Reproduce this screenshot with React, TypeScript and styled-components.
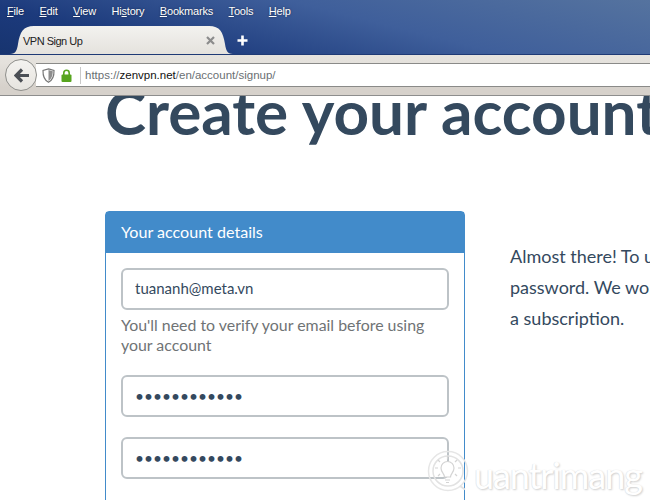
import React from "react";
import styled, { createGlobalStyle } from "styled-components";

const Global = createGlobalStyle`
  html, body { margin: 0; padding: 0; background: #fff; overflow: hidden; }
  #root { width: 650px; height: 500px; }
  * { box-sizing: border-box; }
`;

const Frame = styled.div`
  position: relative;
  width: 650px;
  height: 500px;
  overflow: hidden;
  display: flex;
  flex-direction: column;
`;

const TitleBar = styled.header`
  height: 55px;
  flex: none;
  background: linear-gradient(194deg, #55739f 0%, #3f5f9b 42%, #1c3a7c 78%, #17346f 100%);
  border-bottom: 1px solid #1f3a75;
  display: flex;
  flex-direction: column;
`;

const MenuBar = styled.nav`
  height: 22px;
  display: flex;
  align-items: center;
  padding-left: 7px;
  gap: 15.5px;
  font: 11px "Liberation Sans", Arial, sans-serif;
  letter-spacing: -0.2px;
  color: #fff;
`;

const MenuItem = styled.span`
  text-shadow: 0 0 2px rgba(0, 0, 0, 0.5);
  u { text-underline-offset: 1px; }
`;

const TabStrip = styled.div`
  height: 28px;
  margin-top: 5px;
  display: flex;
  align-items: center;
  padding-left: 10px;
`;

const Tab = styled.div`
  position: relative;
  width: 223px;
  height: 28px;
  display: flex;
  align-items: center;
  justify-content: space-between;
  padding: 1px 18px 0 13px;
  font: 11px "Liberation Sans", Arial, sans-serif;
  letter-spacing: -0.5px;
  color: #222;
`;

const TabShape = styled.svg`
  position: absolute;
  inset: 0;
`;

const TabLabel = styled.span`
  position: relative;
`;

const TabClose = styled.svg`
  position: relative;
`;

const NewTab = styled.svg`
  margin-left: 3px;
`;

const Toolbar = styled.div`
  position: relative;
  height: 41px;
  flex: none;
  background: linear-gradient(#e6e3de, #e4e1dc 20%, #d6d1cb 80%);
  border-bottom: 1px solid #8d8d8d;
  padding: 8px 0 0 36px;
`;

const AddressBar = styled.div`
  height: 24px;
  background: #fff;
  border-top: 1px solid #8a8a88;
  border-bottom: 1px solid #8a8a88;
  display: flex;
  align-items: center;
  padding-left: 6px;
`;

const BackButton = styled.div`
  position: absolute;
  left: 5px;
  top: 4px;
  width: 32px;
  height: 32px;
  border-radius: 50%;
  border: 1px solid #8f8f8c;
  background: linear-gradient(#f4f3f0, #e6e4df);
  display: flex;
  align-items: center;
  justify-content: center;
`;

const LockGroup = styled.div`
  display: flex;
  align-items: center;
  gap: 6px;
  width: 39px;
  height: 17px;
  border-right: 1px solid #c9c9c9;
`;

const Url = styled.div`
  padding-left: 4px;
  font: 11.5px "Liberation Sans", Arial, sans-serif;
  color: #6a6f73;
  b { font-weight: 400; color: #111; }
`;

const Content = styled.main`
  flex: 1;
  min-height: 0;
  overflow: hidden;
  padding-left: 105px;
`;

const Heading = styled.h1`
  margin: -21px 0 0;
  font: 700 62px/72px Lato, sans-serif;
  color: #34495e;
  white-space: nowrap;
`;

const Columns = styled.div`
  display: flex;
  margin-top: 64px;
  gap: 45px;
`;

const Card = styled.section`
  flex: none;
  width: 360px;
  border: 1px solid #428bca;
  border-radius: 4px 4px 0 0;
  height: 400px;
`;

const CardHeader = styled.h2`
  margin: 0;
  height: 41px;
  background: #428bca;
  color: #fff;
  font: 400 16.1px/40px Lato, sans-serif;
  padding-left: 15px;
`;

const CardBody = styled.div`
  padding: 15px 15px 0;
  display: flex;
  flex-direction: column;
`;

const Field = styled.input<{ $gap?: number }>`
  display: block;
  width: 328px;
  height: 42px;
  margin-top: ${(p) => p.$gap ?? 0}px;
  border: 2px solid #bdc3c7;
  border-radius: 6px;
  padding: 0 12px 2px;
  font: 15px Lato, sans-serif;
  color: #34495e;
  outline: none;
  background: #fff;
`;

const PasswordField = styled(Field)`
  padding-bottom: 0;
  font-size: 15.5px;
`;

const Help = styled.p`
  margin: 5px 0 0;
  font: 15.9px/20px Lato, sans-serif;
  color: #6f7375;
`;

const Intro = styled.p`
  margin: 30px 0 0;
  font: 18px/31px Lato, sans-serif;
  color: #34495e;
  white-space: nowrap;
`;

const Watermark = styled.div`
  position: absolute;
  left: 425px;
  top: 449px;
  display: flex;
  align-items: center;
  pointer-events: none;
`;

const WatermarkText = styled.span`
  margin-left: -1px;
  margin-top: 1px;
  font: 400 36px Lato, sans-serif;
  letter-spacing: -1.1px;
  color: #fff;
  text-shadow: 1px 1px 2px #cfcfcf, -0.5px -0.5px 1px #e2e2e2;
`;

const ShieldIcon = () => (
  <svg width="13" height="15" viewBox="0 0 13 15">
    <path d="M6.5.8 12 2.400c.2 5.400-1.300 9.600-5.500 11.800C2.300 12 .8 7.800 1 2.400z" fill="#fff" stroke="#777" strokeWidth="1.200" />
    <path d="M6.500 2v11C9.500 11 10.700 7.500 10.800 3.300z" fill="#8d8d8d" />
  </svg>
);

const LockIcon = () => (
  <svg width="11" height="13" viewBox="0 0 11 13">
    <path d="M2.800 6V4a2.700 2.700 0 0 1 5.400 0v2" fill="none" stroke="#57a51f" strokeWidth="1.600" />
    <rect x="0.500" y="5.500" width="10" height="7.500" rx="1" fill="#57a51f" />
  </svg>
);

const Bulb = () => (
  <svg width="50" height="50" viewBox="0 0 50 50" fill="none">
    <circle cx="23" cy="22" r="19.500" stroke="#e6e6e6" strokeWidth="1.500" />
    <circle cx="23" cy="22" r="15" stroke="#e2e2e2" strokeWidth="1.500" />
    <path d="M19.500 28c0-3.500-3.500-4.500-3.500-9a6.500 6.500 0 0 1 13 0c0 4.500-3.500 5.500-3.500 9z" fill="#fff" stroke="#d4d4d4" strokeWidth="1.200" />
    <path d="M20 31h5M21 33.500h3M22.500 7.500v3M13 11l2 2M32 11l-2 2M10 19h3M33 19h3M13 27l2-2M32 27l-2-2" stroke="#d4d4d4" strokeWidth="1.200" />
    <path d="M35 37l5 3.500" stroke="#e2e2e2" strokeWidth="2" />
  </svg>
);

const menu: [string, string][] = [
  ["F", "ile"],
  ["E", "dit"],
  ["V", "iew"],
  ["", "History"],
  ["B", "ookmarks"],
  ["T", "ools"],
  ["H", "elp"],
];

export default function App() {
  return (
    <Frame>
      <Global />
      <TitleBar>
        <MenuBar>
          {menu.map(([a, b]) => (
            <MenuItem key={b}>
              {b === "History" ? (
                <>
                  Hi<u>s</u>tory
                </>
              ) : (
                <>
                  <u>{a}</u>
                  {b}
                </>
              )}
            </MenuItem>
          ))}
        </MenuBar>
        <TabStrip>
          <Tab>
            <TabShape width="223" height="28" viewBox="0 0 223 28">
              <defs>
                <linearGradient id="tabFill" x1="0" y1="0" x2="0" y2="1">
                  <stop offset="0" stopColor="#f3f2ef" />
                  <stop offset="1" stopColor="#e5e2dd" />
                </linearGradient>
              </defs>
              <path d="M0 28c6 0 7-4 8-10C10 6 13 0 24 0h175c11 0 14 6 16 18 1 6 2 10 8 10z" fill="url(#tabFill)" />
            </TabShape>
            <TabLabel>VPN Sign Up</TabLabel>
            <TabClose width="9" height="9" viewBox="0 0 9 9">
              <path d="M1 1l7 7M8 1L1 8" stroke="#8c8c8c" strokeWidth="2.200" />
            </TabClose>
          </Tab>
          <NewTab width="13" height="13" viewBox="0 0 13 13">
            <path d="M6.500 1.500v10M1.500 6.500h10" stroke="#fff" strokeWidth="2.600" />
          </NewTab>
        </TabStrip>
      </TitleBar>
      <Toolbar>
        <AddressBar>
          <LockGroup>
            <ShieldIcon />
            <LockIcon />
          </LockGroup>
          <Url>
            https://<b>zenvpn.net</b>/en/account/signup/
          </Url>
        </AddressBar>
        <BackButton>
          <svg width="15" height="15" viewBox="0 0 15 15">
            <path d="M8 1.500 2 7.500l6 6M2.500 7.500H15" fill="none" stroke="#4b4f55" strokeWidth="3.200" />
          </svg>
        </BackButton>
      </Toolbar>
      <Content>
        <Heading>Create your account</Heading>
        <Columns>
          <Card>
            <CardHeader>Your account details</CardHeader>
            <CardBody>
              <Field type="text" readOnly value="tuananh@meta.vn" />
              <Help>You'll need to verify your email before using your account</Help>
              <PasswordField $gap={20} type="password" readOnly value="aaaaaaaaaaaa" />
              <PasswordField $gap={20} type="password" readOnly value="aaaaaaaaaaaa" />
            </CardBody>
          </Card>
          <Intro>
            Almost there! To use
            <br />
            password. We won't
            <br />a subscription.
          </Intro>
        </Columns>
      </Content>
      <Watermark>
        <Bulb />
        <WatermarkText>uantrimang</WatermarkText>
      </Watermark>
    </Frame>
  );
}
